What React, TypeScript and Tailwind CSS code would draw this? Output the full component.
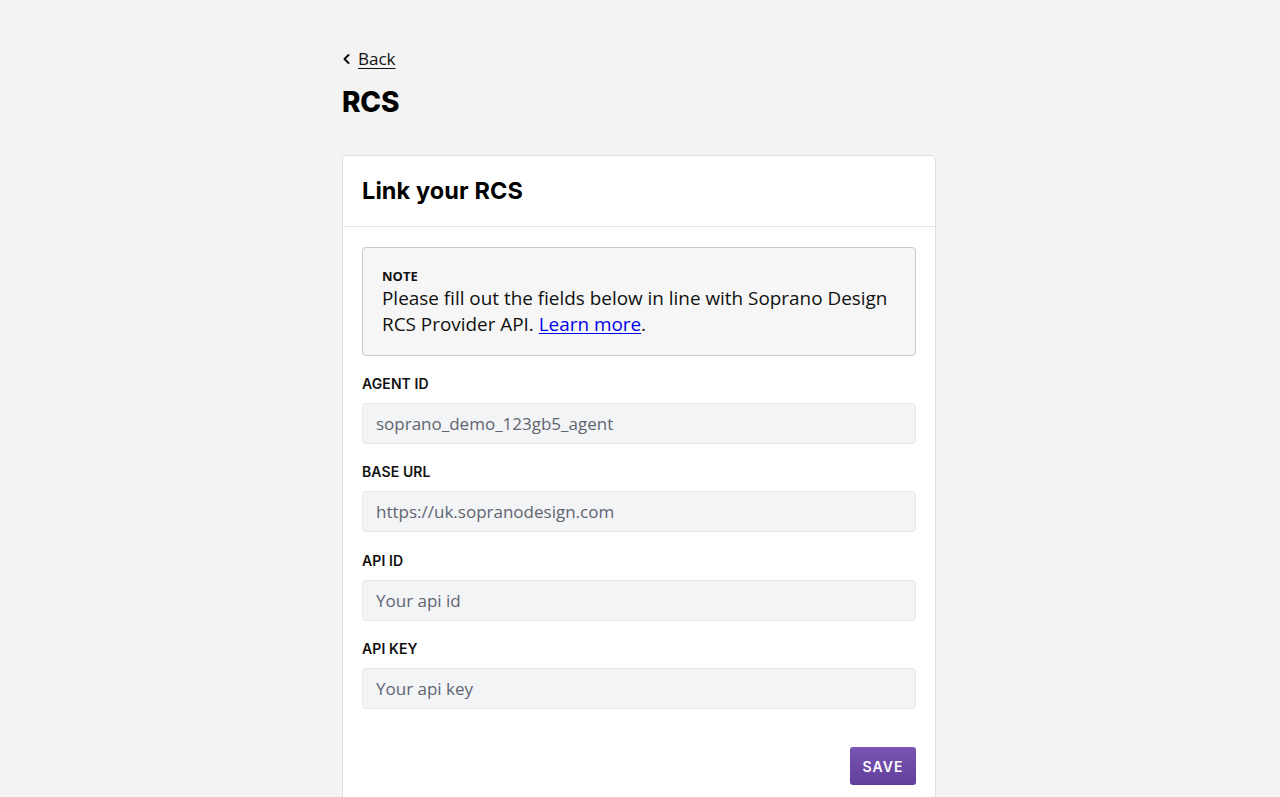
import React from 'react';

const heading = { fontFamily: 'Inter, "Noto Sans", sans-serif' };

const fields = [
    { label: 'AGENT ID', value: 'soprano_demo_123gb5_agent' },
    { label: 'BASE URL', value: 'https://uk.sopranodesign.com' },
    { label: 'API ID', value: 'Your api id' },
    { label: 'API KEY', value: 'Your api key' },
];

export default function App() {
    return (
        <div className="min-h-screen bg-[#f3f3f3] font-['Open_Sans',sans-serif]">
            <div className="w-[594px] ml-[342px] pt-[47px]">
                {/* Back link */}
                <a href="#" className="flex items-center gap-[6px] text-[17px] leading-[24px] text-[#111] w-max">
                    <svg width="10" height="12" viewBox="0 0 10 12" fill="none" stroke="#111" strokeWidth="2" strokeLinecap="round" strokeLinejoin="round">
                        <path d="M6.5 2 L2.5 6 L6.5 10" />
                    </svg>
                    <span className="underline underline-offset-[3px]">Back</span>
                </a>

                <h1 style={heading} className="mt-[15px] text-[28px] leading-[32px] font-extrabold text-black tracking-[-0.2px]">RCS</h1>

                {/* Card */}
                <div className="mt-[37px] bg-white border border-[#dedfe2] rounded-[5px]">
                    <div className="h-[71px] flex items-center px-[19px] border-b border-[#e3e4e7]">
                        <h2 style={heading} className="text-[23.5px] font-bold text-black tracking-[0.1px]">Link your RCS</h2>
                    </div>

                    <div className="px-[19px] pt-[20px] pb-[40px]">
                        <div className="bg-[#f6f6f6] border-[1.5px] border-[#c9c9c9] rounded-[4px] px-[19px] pt-[19px] pb-[18px]">
                            <div className="text-[13px] leading-[18px] font-bold text-[#111]">NOTE</div>
                            <p className="text-[18.9px] leading-[26px] text-[#111]">
                                Please fill out the fields below in line with Soprano Design RCS Provider API.{' '}
                                <a href="#" className="text-[#0000ee] underline underline-offset-[2px]">Learn more</a>.
                            </p>
                        </div>

                        <div className="mt-[18px] flex flex-col gap-[18.4px]">
                            {fields.map((f) => (
                                <div key={f.label}>
                                    <label style={heading} className="block text-[14px] leading-[20px] font-semibold text-[#111] tracking-[0.1px]">{f.label}</label>
                                    <div className="mt-[9px] h-[41px] flex items-center px-[13px] bg-[#f3f4f6] border border-[#e6e7ea] rounded-[4px] text-[17px] text-[#5f6470]">
                                        {f.value}
                                    </div>
                                </div>
                            ))}
                        </div>

                        <div className="mt-[38px] flex justify-end">
                            <button style={heading} className="w-[66px] h-[38px] rounded-[3px] bg-gradient-to-b from-[#7a55b3] to-[#623f9c] text-white text-[14px] font-semibold tracking-[1px]">
                                SAVE
                            </button>
                        </div>
                    </div>
                </div>
            </div>
        </div>
    );
}
